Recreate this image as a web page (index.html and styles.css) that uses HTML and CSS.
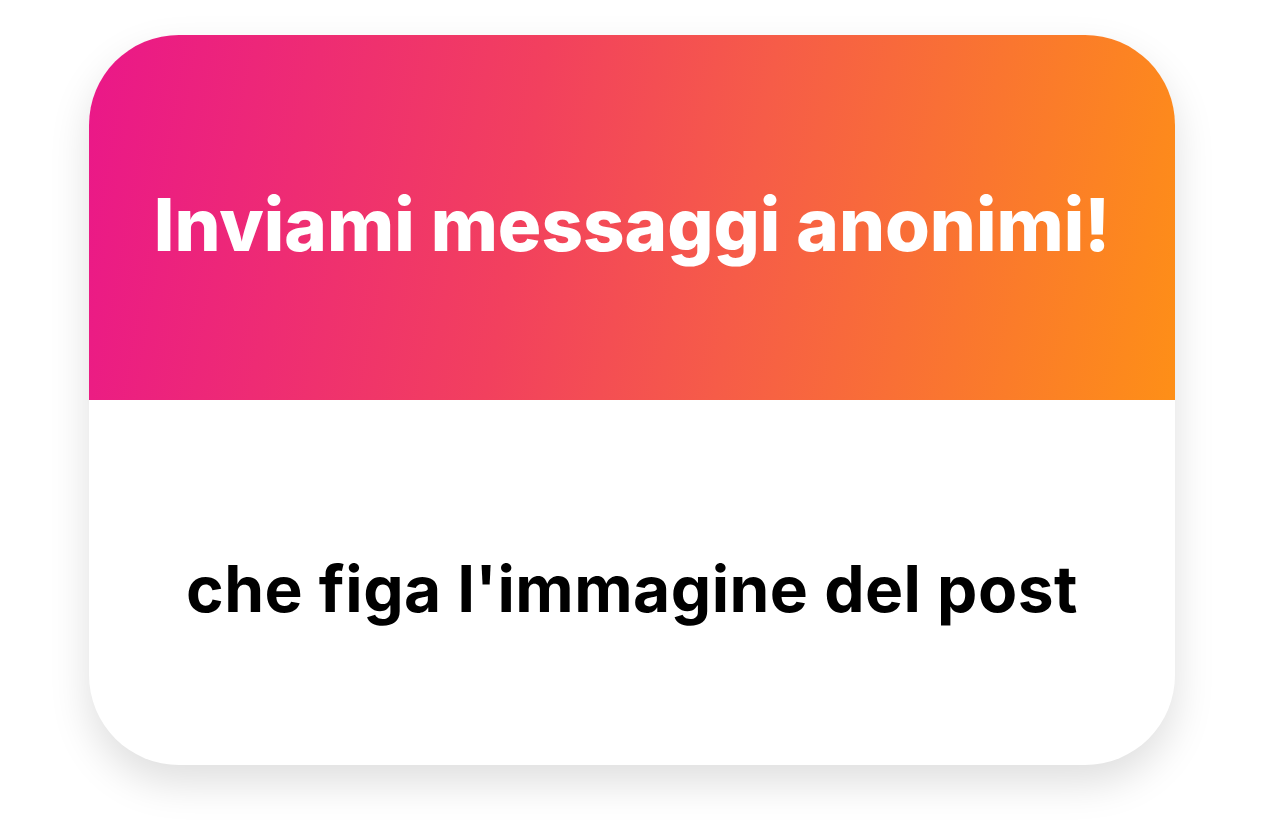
FILE: index.html
```html
<!DOCTYPE html>
<html lang="it">

<head>
  <meta charset="UTF-8">
  <meta name="viewport" content="width=device-width, initial-scale=1.0">
  <title>Messaggi anonimi</title>
  <link rel="stylesheet" href="styles.css">
</head>

<body>
  <div class="card">
    <div class="card-header">
      <h1>Inviami messaggi anonimi!</h1>
    </div>
    <div class="card-body">
      <p>che figa l'immagine del post</p>
    </div>
  </div>
</body>

</html>
```

FILE: styles.css
```css
/* Global Styles */
body {
  margin: 0;
  padding: 35px 0 0 89px;
  background: #fff;
  font-family: 'Inter', 'Liberation Sans', sans-serif;
  width: 1264px;
  height: 822px;
  box-sizing: border-box;
  overflow: hidden;
}

/* Card */
.card {
  width: 1086px;
  height: 730px;
  border-radius: 90px;
  overflow: hidden;
  background: #fff;
  box-shadow: 0 18px 40px rgba(0, 0, 0, 0.13);
  display: flex;
  flex-direction: column;
}

.card-header {
  height: 365px;
  background: linear-gradient(100deg, #ea1789 0%, #f2405e 40%, #f65c48 60%, #fe8f17 100%);
  display: flex;
  align-items: center;
  justify-content: center;
}

.card-header h1 {
  margin: 0;
  color: #fff;
  font-size: 72.5px;
  font-weight: 800;
  letter-spacing: 0;
  padding-top: 14px;
}

.card-body {
  flex: 1;
  display: flex;
  align-items: center;
  justify-content: center;
}

.card-body p {
  margin: 0;
  color: #000;
  font-size: 64px;
  font-weight: 700;
  letter-spacing: 0.5px;
  padding-top: 12px;
}
```
